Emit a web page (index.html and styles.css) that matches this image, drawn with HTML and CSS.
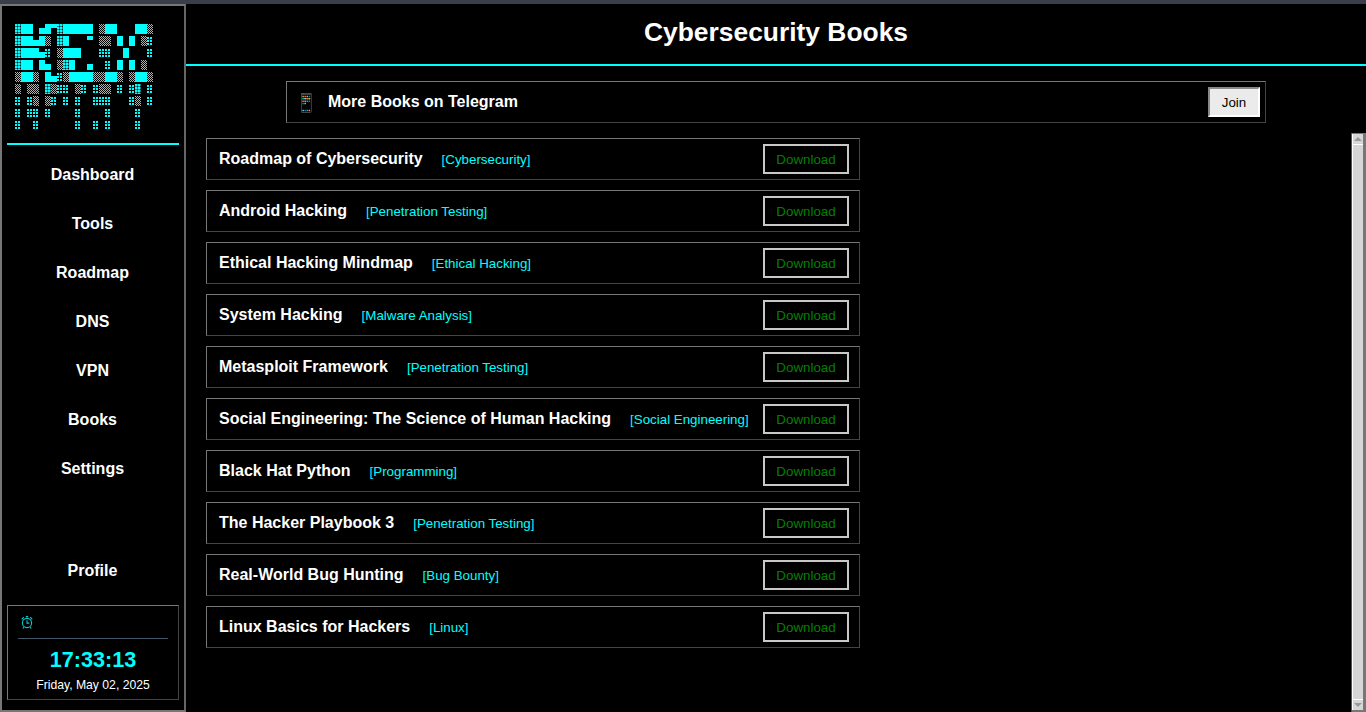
FILE: index.html
```html
<!DOCTYPE html>
<html lang="en">
<head>
<meta charset="utf-8">
<title>Cybersecurity Books</title>
<link rel="stylesheet" href="styles.css">
</head>
<body>
<div class="app">
  <aside class="sidebar">
    <div class="logo">
      <svg class="logo-art" width="138" height="106" viewBox="0 0 138 106" role="img" aria-label="KEK logo">
        <defs>
          <pattern id="shade-light" width="6" height="12" patternUnits="userSpaceOnUse">
            <path class="cyan" d="M0 1h2v2H0zM3 1h2v2H3zM0 4h2v2H0zM3 4h2v2H3zM0 7h2v2H0zM3 7h2v2H3z"/>
          </pattern>
          <pattern id="shade-medium" width="2" height="2" patternUnits="userSpaceOnUse">
            <path class="cyan" d="M0 0h1v1H0zM1 1h1v1H1z"/>
          </pattern>
          <pattern id="shade-dense" width="3" height="3" patternUnits="userSpaceOnUse">
            <path class="teal" d="M0 0h3v3H0z"/>
            <path class="cyan" d="M0 0h2v2H0z"/>
            <path class="hole" d="M2 2h1v1H2z"/>
          </pattern>
        </defs>
        <path class="cyan" d="M6 0h12v10H6zM30 0h6v10h-6zM48 0h30v10H48zM90 0h12v10H90zM120 0h12v10h-12zM6 12h12v10H6zM24 12h6v10h-6zM48 12h6v10h-6zM102 12h6v10h-6zM114 12h6v10h-6zM6 24h18v10H6zM48 24h18v10H48zM108 24h6v10h-6zM6 36h12v10H6zM24 36h6v10h-6zM54 36h6v10h-6zM102 36h6v10h-6zM114 36h6v10h-6zM6 48h12v10H6zM30 48h6v10h-6zM54 48h24v10H54zM90 48h12v10H90zM120 48h12v10h-12z"/>
        <path class="cyan" d="M24 4h6v6h-6zM18 16h6v6h-6zM24 28h6v6h-6zM30 40h6v6h-6zM72 40h6v6h-6zM36 52h6v6h-6zM36 0h6v4h-6zM72 12h6v4h-6z"/>
        <path fill="url(#shade-dense)" d="M0 0h6v10H0zM42 0h6v10h-6zM0 12h6v10H0zM42 12h6v10h-6zM0 24h6v10H0zM0 36h6v10H0zM48 36h6v10h-6zM30 60h6v10h-6zM120 60h6v10h-6z"/>
        <path fill="url(#shade-medium)" d="M84 0h6v10h-6zM132 0h6v10h-6zM30 12h6v10h-6zM84 12h12v10H84zM126 12h6v10h-6zM42 24h6v10h-6zM42 36h6v10h-6zM126 36h6v10h-6zM0 48h6v10H0zM18 48h6v10h-6zM48 48h6v10h-6zM78 48h12v10H78zM102 48h6v10h-6zM114 48h6v10h-6zM132 48h6v10h-6zM0 60h6v10H0zM12 60h12v10H12zM36 60h6v10h-6zM60 60h6v10h-6zM84 60h12v10H84zM18 72h6v10h-6zM30 72h6v10h-6zM120 72h6v10h-6z"/>
        <path fill="url(#shade-light)" d="M132 12h6v10h-6zM30 24h6v10h-6zM84 24h12v10H84zM132 24h6v10h-6zM90 36h6v10h-6zM42 48h6v10h-6zM42 60h12v10H42zM66 60h6v10h-6zM78 60h6v10h-6zM102 60h6v10h-6zM114 60h6v10h-6zM132 60h6v10h-6zM0 72h6v10H0zM12 72h6v10h-6zM36 72h6v10h-6zM48 72h6v10h-6zM60 72h6v10h-6zM78 72h18v10H78zM114 72h6v10h-6zM132 72h6v10h-6zM0 84h6v10H0zM12 84h12v10H12zM30 84h6v10h-6zM60 84h6v10h-6zM90 84h6v10h-6zM120 84h6v10h-6zM0 96h6v10H0zM18 96h6v10h-6zM60 96h6v10h-6zM78 96h6v10h-6zM90 96h6v10h-6zM120 96h6v10h-6z"/>
      </svg>
    </div>
    <nav class="nav">
      <a class="nav-item">Dashboard</a>
      <a class="nav-item">Tools</a>
      <a class="nav-item">Roadmap</a>
      <a class="nav-item">DNS</a>
      <a class="nav-item">VPN</a>
      <a class="nav-item">Books</a>
      <a class="nav-item">Settings</a>
    </nav>
    <a class="nav-item profile">Profile</a>
    <div class="clock">
      <div class="clock-icon">
        <svg class="alarm" width="12" height="13" viewBox="0 0 13 14" fill="none" stroke="currentColor" stroke-width="1.2">
          <circle cx="6.5" cy="7.5" r="5"/>
          <path d="M6.5 4.5V7.7H9M.8 3.5 3 1.2M12.2 3.5 10 1.2M5.2.6H7.8M3 12 2 13.5M10 12 11 13.5"/>
        </svg>
      </div>
      <div class="clock-time">17:33:13</div>
      <div class="clock-date">Friday, May 02, 2025</div>
    </div>
  </aside>
  <main class="main">
    <header class="header"><h1>Cybersecurity Books</h1></header>
    <div class="telegram">
      <div class="telegram-label"><span class="phone">📱</span><span>More Books on Telegram</span></div>
      <button class="join">Join</button>
    </div>
    <div class="books">
      <ul class="book-list">
        <li class="book"><span class="book-title">Roadmap of Cybersecurity</span><span class="book-tag">[Cybersecurity]</span><button class="download">Download</button></li>
        <li class="book"><span class="book-title">Android Hacking</span><span class="book-tag">[Penetration Testing]</span><button class="download">Download</button></li>
        <li class="book"><span class="book-title">Ethical Hacking Mindmap</span><span class="book-tag">[Ethical Hacking]</span><button class="download">Download</button></li>
        <li class="book"><span class="book-title">System Hacking</span><span class="book-tag">[Malware Analysis]</span><button class="download">Download</button></li>
        <li class="book"><span class="book-title">Metasploit Framework</span><span class="book-tag">[Penetration Testing]</span><button class="download">Download</button></li>
        <li class="book"><span class="book-title">Social Engineering: The Science of Human Hacking</span><span class="book-tag">[Social Engineering]</span><button class="download">Download</button></li>
        <li class="book"><span class="book-title">Black Hat Python</span><span class="book-tag">[Programming]</span><button class="download">Download</button></li>
        <li class="book"><span class="book-title">The Hacker Playbook 3</span><span class="book-tag">[Penetration Testing]</span><button class="download">Download</button></li>
        <li class="book"><span class="book-title">Real-World Bug Hunting</span><span class="book-tag">[Bug Bounty]</span><button class="download">Download</button></li>
        <li class="book"><span class="book-title">Linux Basics for Hackers</span><span class="book-tag">[Linux]</span><button class="download">Download</button></li>
      </ul>
      <div class="scrollbar">
        <div class="scroll-btn"><span class="arrow-up"></span></div>
        <div class="scroll-track"></div>
        <div class="scroll-btn"><span class="arrow-down"></span></div>
      </div>
    </div>
  </main>
</div>
</body>
</html>
```
FILE: styles.css
```css
* { box-sizing: border-box; }
html, body { margin: 0; height: 100%; overflow: hidden; }
body { background: #000; color: #fff; font-family: "Liberation Sans", Arial, sans-serif; }
.app { display: flex; height: 712px; border-top: 4px solid #3a3d4a; background: #000; }
.sidebar { width: 186px; height: 708px; flex: none; display: flex; flex-direction: column; border: 2px solid #777; border-right-color: #666; padding: 0 5px; }
.logo { height: 139px; padding: 18px 0 0 8px; border-bottom: 2px solid #0ff; }
.logo-art { display: block; }
.cyan { fill: #0ff; }
.teal { fill: #088; }
.hole { fill: #012; }
.nav { display: flex; flex-direction: column; margin-top: 5px; }
.nav-item { display: block; height: 49px; line-height: 49px; padding-right: 1px; text-align: center; font-size: 16px; font-weight: 700; color: #fff; }
.profile { margin-top: 53px; }
.clock { margin-top: 10px; height: 95px; border: 1px solid; border-color: #777 #444 #444 #777; padding: 6px 10px; text-align: center; }
.clock-icon { height: 27px; border-bottom: 1px solid #456; color: #0cc; padding: 4px 0 0 3px; }
.alarm { display: block; }
.clock-time { margin-top: 8px; font-size: 21.6px; line-height: 26px; font-weight: 700; color: #0ff; }
.clock-date { margin-top: 5px; font-size: 12.2px; line-height: 14px; color: #fff; }
.main { flex: 1; min-width: 0; display: flex; flex-direction: column; }
.header { height: 62px; border-bottom: 2px solid #0ff; text-align: center; }
.header h1 { margin: 0; font-size: 26.4px; line-height: 56px; font-weight: 700; }
.telegram { width: 980px; height: 42px; margin: 15px 0 0 100px; display: flex; align-items: center; justify-content: space-between; border: 1px solid; border-color: #777 #444 #444 #777; padding: 0 5px 0 8px; }
.telegram-label { display: flex; align-items: center; gap: 13px; font-size: 16px; font-weight: 700; }
.phone { font-family: "DejaVu Sans", sans-serif; font-size: 18px; width: 20px; }
.join { width: 52px; height: 30px; background: #ebebeb; border: 2px solid; border-color: #888 #fff #fff #888; color: #000; font: 13.33px "Liberation Sans", sans-serif; padding: 0; }
.books { flex: 1; display: flex; min-height: 0; position: relative; }
.book-list { list-style: none; margin: 15px 0 0 20px; padding: 0; width: 654px; display: flex; flex-direction: column; gap: 10px; }
.book { height: 42px; display: flex; align-items: center; border: 1px solid; border-color: #777 #444 #444 #777; padding: 0 10px 0 12px; }
.book-title { font-size: 16px; font-weight: 700; }
.book-tag { margin-left: 19px; font-size: 13.33px; color: #0ff; }
.download { margin-left: auto; width: 86px; height: 30px; background: #000; border: 2px solid #c8c8c8; color: #008000; font: 13.33px "Liberation Sans", sans-serif; padding: 0; }
.scrollbar { position: absolute; right: 0; top: 10px; bottom: 0; width: 15px; display: flex; flex-direction: column; background: #777; border-left: 1px solid #555; padding: 1px 3px 2px 0; }
.scroll-btn { height: 10px; flex: none; background: #d6d6d6; border-left: 1px solid #fff; display: flex; align-items: center; justify-content: center; }
.scroll-track { flex: 1; background: #d6d6d6; border: 1px solid #fff; border-right: 0; }
.arrow-up, .arrow-down { width: 0; height: 0; border: 4px solid transparent; }
.arrow-up { border-top: 0; border-bottom: 4px solid #999; }
.arrow-down { border-bottom: 0; border-top: 4px solid #999; }
```
